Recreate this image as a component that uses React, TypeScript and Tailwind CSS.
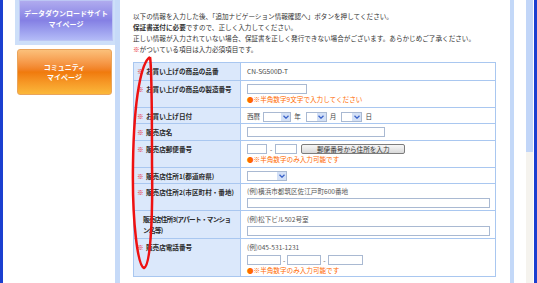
const font = { fontFamily: '"Noto Sans CJK JP", "Noto Sans", sans-serif' };

function Note({ children }: { children: React.ReactNode }) {
  return (
    <div className="leading-[11px] text-[#ff6a00]">
      <span>●</span>
      {children}
    </div>
  );
}

function Field({ className }: { className: string }) {
  return <div className={"h-[10px] border border-[#a9b9d2] bg-white " + className} />;
}

function Sel({ className }: { className: string }) {
  return (
    <div className={"flex h-[10px] border border-[#a9b9d2] bg-white " + className}>
      <div className="flex-1" />
      <div className="flex w-[9px] items-center justify-center bg-[#d3e0f6]">
        <svg width="6" height="4" viewBox="0 0 6 4">
          <path d="M0.5 0.8 L3 3.2 L5.5 0.8" fill="none" stroke="#3a62c8" strokeWidth="1.3" />
        </svg>
      </div>
    </div>
  );
}

function Row({
  h,
  first,
  label,
  req = true,
  children,
}: {
  h: string;
  first?: boolean;
  label: React.ReactNode;
  req?: boolean;
  children: React.ReactNode;
}) {
  return (
    <div className={"flex " + h + (first ? "" : " border-t border-[#a9c7f0]")}>
      <div className="w-[107px] shrink-0 border-r border-[#a9c7f0] bg-[#dbe8fb] pt-[3px] pl-[3px] font-bold leading-[11px] text-[#2a2a2a]">
        {req ? (
          <div className="flex">
            <span className="w-[9px] shrink-0 text-[#e81818]">※</span>
            <span>{label}</span>
          </div>
        ) : (
          <div className="pl-[6px] tracking-[-0.7px]">{label}</div>
        )}
      </div>
      <div className="flex-1 pt-[2px] pl-[6px] text-[#444]">{children}</div>
    </div>
  );
}

export default function App() {
  return (
    <div className="flex h-[283px] w-[537px] overflow-hidden bg-white text-[6.6px]" style={font}>
      <div className="w-[3px] bg-[#1b3fd0]" />
      <div className="w-[12px]" />

      {/* side menu */}
      <div className="w-[100px]">
        <div className="h-[45px] bg-[#cddff9] pl-[4px] pr-[2px]">
          <div className="flex h-[41px] flex-col items-center justify-center border border-[#bcc6f4] bg-gradient-to-b from-[#b0abee] via-[#8580e4] to-[#b3bbf7] pb-[4px] text-[7px] font-bold leading-[11px] text-white">
            <div>データダウンロードサイト</div>
            <div>マイページ</div>
          </div>
        </div>
        <div className="mt-[4px] ml-[2px] mr-[3px] flex h-[46px] flex-col items-center justify-center rounded-[3px] border border-[#eaa45a] bg-gradient-to-b from-[#fbc07a] via-[#f07a0c] to-[#fbb83a] text-[7px] font-bold leading-[10px] text-white">
          <div>コミュニティ</div>
          <div>マイページ</div>
        </div>
      </div>

      <div className="w-[5px] bg-[#c6daf8]" />

      {/* main */}
      <div className="relative w-[390px] pl-[13px] pr-[14px] pt-[11px] text-[#333]">
        <div className="leading-[11px]">
          <div>以下の情報を入力した後、「追加ナビゲーション情報確認へ」ボタンを押してください。</div>
          <div>
            <span className="font-bold">保証書送付に必要</span>ですので、正しく入力してください。
          </div>
          <div>正しい情報が入力されていない場合、保証書を正しく発行できない場合がございます。あらかじめご了承ください。</div>
          <div>
            <span className="text-[#e81818]">※</span>がついている項目は入力必須項目です。
          </div>
        </div>

        <div className="mt-[7px] border border-[#a9c7f0]">
          <Row h="h-[17px]" first label="お買い上げの商品の品番">
            <div className="pt-[1px] leading-[11px]">CN-SG500D-T</div>
          </Row>
          <Row h="h-[27px]" label="お買い上げの商品の製造番号">
            <Field className="mt-[1px] w-[60px]" />
            <Note>※半角数字9文字で入力してください</Note>
          </Row>
          <Row h="h-[16px]" label="お買い上げ日付">
            <div className="flex items-center gap-[3px] pt-[1px] leading-[11px]">
              <span>西暦</span>
              <Sel className="w-[28px]" />
              <span className="mr-[2px]">年</span>
              <Sel className="w-[21px]" />
              <span className="mr-[2px]">月</span>
              <Sel className="w-[21px]" />
              <span>日</span>
            </div>
          </Row>
          <Row h="h-[17px]" label="販売店名">
            <Field className="mt-[1px] w-[138px]" />
          </Row>
          <Row h="h-[27px]" label="販売店郵便番号">
            <div className="mt-[1px] flex items-center gap-[3px]">
              <Field className="w-[20px]" />
              <span className="leading-[10px]">-</span>
              <Field className="w-[22px]" />
              <div className="ml-[1px] flex h-[10px] w-[104px] items-center justify-center rounded-[2px] border border-[#7c7c7c] bg-gradient-to-b from-[#f7f7f7] to-[#d9d9d9] leading-[10px] text-[#333]">
                郵便番号から住所を入力
              </div>
            </div>
            <Note>※半角数字のみ入力可能です</Note>
          </Row>
          <Row h="h-[16px]" label="販売店住所1(都道府県)">
            <Sel className="mt-[1px] w-[40px]" />
          </Row>
          <Row h="h-[27px]" label="販売店住所2(市区町村・番地)">
            <div className="leading-[11px] text-[#555]">(例)横浜市都筑区佐江戸町600番地</div>
            <Field className="mt-[1px] w-[243px]" />
          </Row>
          <Row
            h="h-[28px]"
            req={false}
            label={
              <>
                <div className="whitespace-nowrap">販売店住所3(アパート・マンショ</div>
                <div>ン名等)</div>
              </>
            }
          >
            <div className="pt-[1px] leading-[11px] text-[#555]">(例)松下ビル502号室</div>
            <Field className="mt-[1px] w-[243px]" />
          </Row>
          <Row h="h-[38px]" label="販売店電話番号">
            <div className="pt-[1px] leading-[11px] text-[#555]">(例)045-531-1231</div>
            <div className="mt-[2px] flex items-center gap-[2px]">
              <Field className="w-[34px]" />
              <span className="leading-[10px]">-</span>
              <Field className="w-[34px]" />
              <span className="leading-[10px]">-</span>
              <Field className="w-[35px]" />
            </div>
            <Note>※半角数字のみ入力可能です</Note>
          </Row>
        </div>

        {/* hand-drawn annotation */}
        <svg className="absolute left-[8px] top-[54px]" width="28" height="218" viewBox="0 0 28 218">
          <path
            d="M22 3 C 14 8, 6 40, 5 110 C 4 170, 10 212, 16 214 C 22 212, 25 170, 24 110 C 24 50, 24 15, 22 3"
            fill="none"
            stroke="#ee1111"
            strokeWidth="2.5"
          />
        </svg>
      </div>

      <div className="w-[4px] bg-[#c3d8f8]" />
      <div className="w-[12px]" />
      <div className="flex w-[7px] flex-col">
        <div className="h-[152px] bg-[#c2d6f8]" />
        <div className="flex-1 bg-[#f5f3ee]" />
      </div>
      <div className="w-px" />
      <div className="w-[3px] bg-[#1b3fd0]" />
    </div>
  );
}
